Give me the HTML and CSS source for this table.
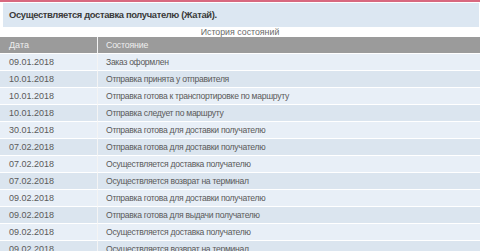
FILE: index.html
```html
<!DOCTYPE html>
<html lang="ru">
<head>
<meta charset="utf-8">
<link rel="stylesheet" href="styles.css">
</head>
<body>
<div class="topline"></div>
<div class="status">Осуществляется доставка получателю (Жатай).</div>
<div class="caption">История состояний</div>
<table class="history">
<thead>
<tr><th class="c-date">Дата</th><th class="c-state">Состояние</th></tr>
</thead>
<tbody>
<tr><td class="c-date">09.01.2018</td><td class="c-state">Заказ оформлен</td></tr>
<tr><td class="c-date">10.01.2018</td><td class="c-state">Отправка принята у отправителя</td></tr>
<tr><td class="c-date">10.01.2018</td><td class="c-state">Отправка готова к транспортировке по маршруту</td></tr>
<tr><td class="c-date">10.01.2018</td><td class="c-state">Отправка следует по маршруту</td></tr>
<tr><td class="c-date">30.01.2018</td><td class="c-state">Отправка готова для доставки получателю</td></tr>
<tr><td class="c-date">07.02.2018</td><td class="c-state">Отправка готова для доставки получателю</td></tr>
<tr><td class="c-date">07.02.2018</td><td class="c-state">Осуществляется доставка получателю</td></tr>
<tr><td class="c-date">07.02.2018</td><td class="c-state">Осуществляется возврат на терминал</td></tr>
<tr><td class="c-date">09.02.2018</td><td class="c-state">Отправка готова для доставки получателю</td></tr>
<tr><td class="c-date">09.02.2018</td><td class="c-state">Отправка готова для выдачи получателю</td></tr>
<tr><td class="c-date">09.02.2018</td><td class="c-state">Осуществляется доставка получателю</td></tr>
<tr><td class="c-date">09.02.2018</td><td class="c-state">Осуществляется возврат на терминал</td></tr>
</tbody>
</table>
</body>
</html>
```
FILE: styles.css
```css
html, body {
  margin: 0;
  padding: 0;
  background: #ffffff;
  font-family: "Liberation Sans", Arial, sans-serif;
  overflow: hidden;
}
.topline {
  height: 2px;
  background: #d8687f;
  margin-bottom: 1px;
}
.status {
  margin-left: 3px;
  margin-right: 1px;
  height: 24px;
  line-height: 24px;
  padding-left: 6px;
  background: #dce7f2;
  color: #3a3a3a;
  font-weight: bold;
  font-size: 9.4px;
  letter-spacing: -0.35px;
}
.caption {
  height: 10px;
  line-height: 11px;
  text-align: center;
  font-size: 8.8px;
  color: #6a6a6a;
}
.history {
  width: 100%;
  border-collapse: separate;
  border-spacing: 0;
  font-size: 9px;
}
.history th,
.history td {
  height: 16px;
  padding: 0 0 0 8px;
  text-align: left;
  border-bottom: 1px solid #ffffff;
  white-space: nowrap;
  line-height: 16px;
}
.history th {
  background: #9b9b9b;
  color: #eeeeee;
  font-weight: normal;
}
.history .c-date {
  width: 88px;
  padding-left: 9px;
  border-right: 1px solid #f4f4f4;
}
.history th.c-state {
  font-size: 8.8px;
  letter-spacing: -0.2px;
}
.history td.c-state {
  font-size: 8.6px;
  letter-spacing: -0.3px;
}
.history td {
  color: #5a5a5a;
}
.history tbody tr:nth-child(odd) td {
  background: #e8eff7;
}
.history tbody tr:nth-child(even) td {
  background: #dbe5ef;
}
```
